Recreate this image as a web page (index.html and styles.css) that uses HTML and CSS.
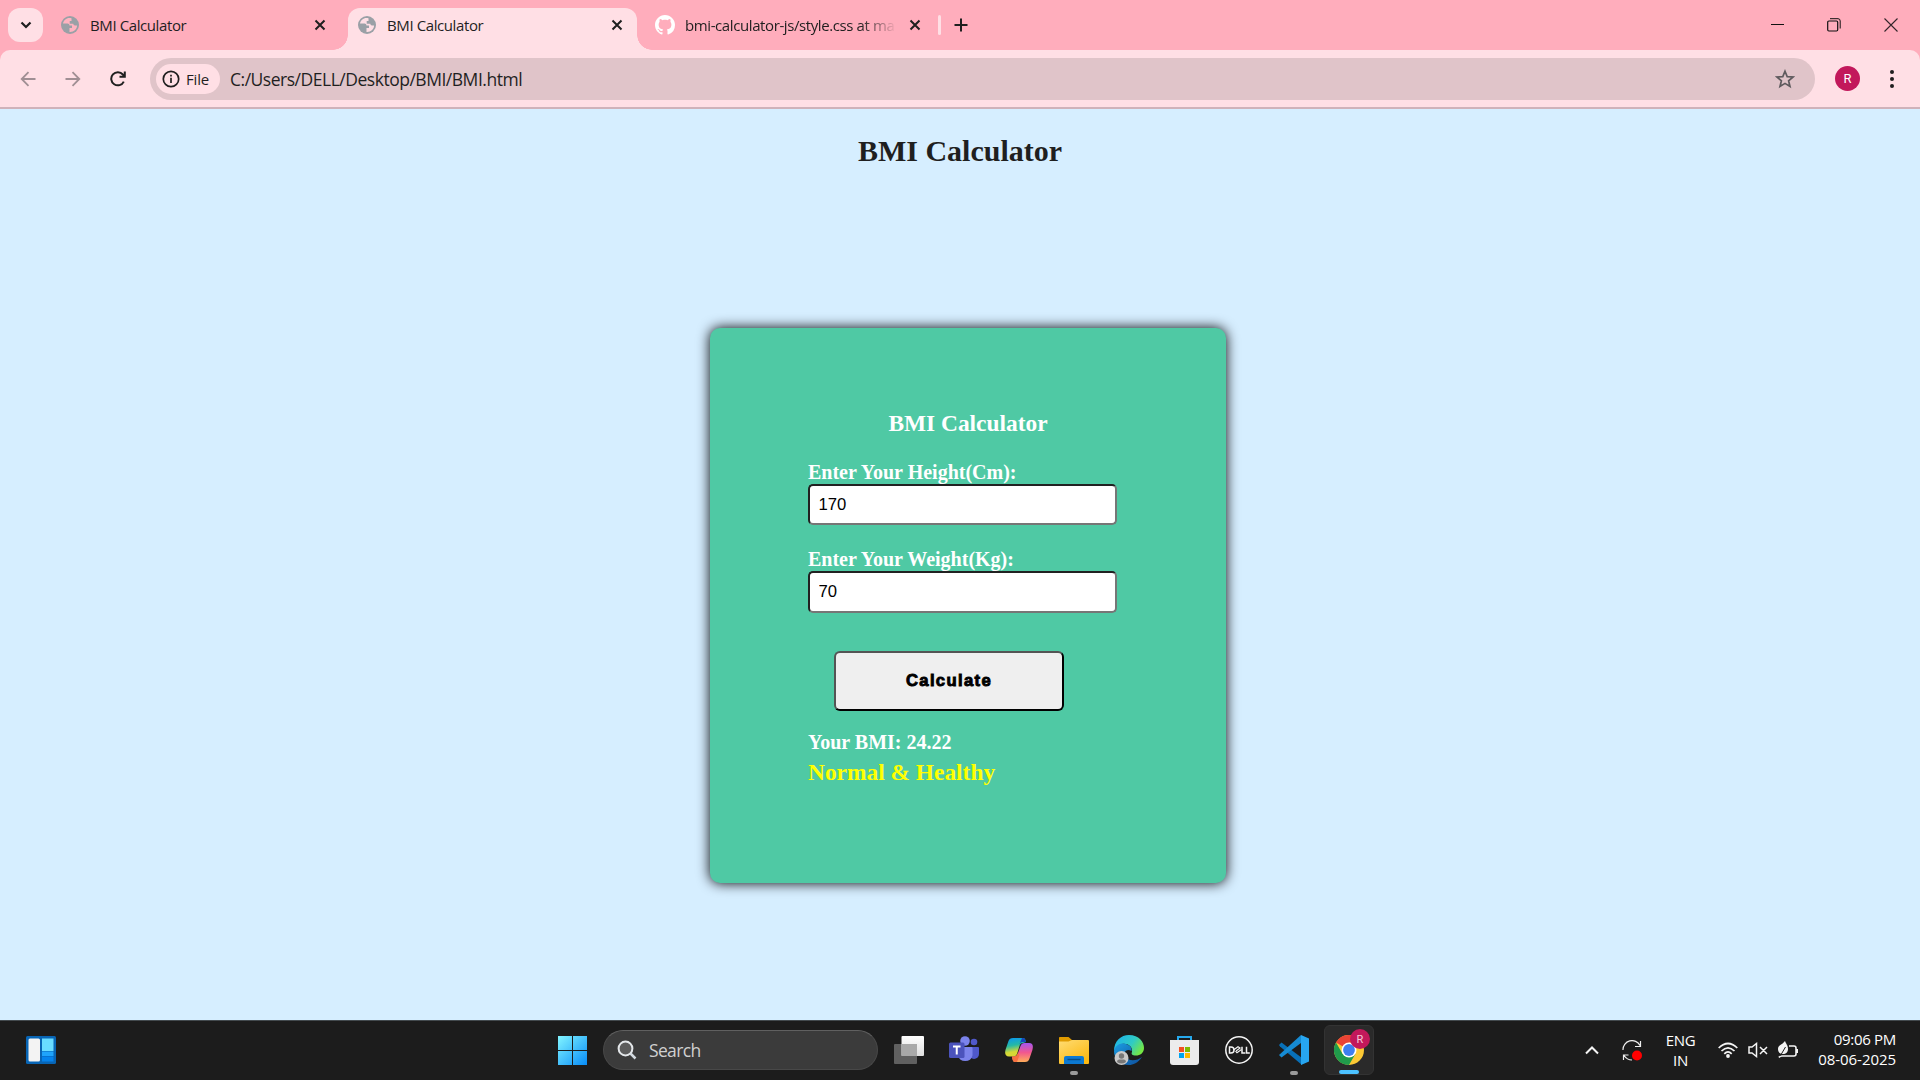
FILE: index.html
```html
<!DOCTYPE html>
<html lang="en">
<head>
<meta charset="utf-8">
<title>BMI Calculator</title>
<link rel="stylesheet" href="styles.css">
</head>
<body>
<svg class="defs" width="0" height="0">
  <defs>
    <symbol id="globe" viewBox="0 0 18 18"><circle cx="9" cy="9" r="9" fill="#9aa0a6"/><path d="M10.500 2.200C6 1 2.500 4 2 7.500H6.500Q8.500 7.500 8.500 9.500H11V12H8.500V15.900C13 16.200 16 13 16.100 9.500H14Q12.300 9.500 12.300 7.800H8.700V5H10.500Z" fill="currentColor"/></symbol>
    <symbol id="close" viewBox="0 0 12 12"><path d="M1.500 1.500L10.500 10.500M10.500 1.500L1.500 10.500" stroke="#1f1f1f" stroke-width="2"/></symbol>
  </defs>
</svg>

<header class="tabstrip">
  <button class="tab-search"><svg width="12" height="8" viewBox="0 0 12 8"><path d="M1.500 1.500L6 6L10.500 1.500" fill="none" stroke="#1f1f1f" stroke-width="2.200"/></svg></button>
  <div class="tab tab-first"><svg class="favicon"><use href="#globe"/></svg><span class="tab-title">BMI Calculator</span><svg class="tab-close"><use href="#close"/></svg></div>
  <div class="tab tab-active"><svg class="favicon"><use href="#globe"/></svg><span class="tab-title">BMI Calculator</span><svg class="tab-close"><use href="#close"/></svg></div>
  <div class="tab tab-last"><svg class="github" viewBox="0 0 16 16"><path fill="#fff" d="M8 0C3.580 0 0 3.580 0 8c0 3.540 2.290 6.530 5.470 7.590.4.070.550-.170.550-.380 0-.190-.010-.820-.010-1.490-2.010.370-2.530-.490-2.690-.940-.090-.230-.480-.940-.820-1.130-.280-.150-.680-.520-.010-.530.630-.010 1.080.580 1.230.820.720 1.210 1.870.870 2.330.660.070-.520.280-.870.510-1.070-1.780-.2-3.640-.890-3.640-3.950 0-.870.310-1.590.820-2.150-.080-.2-.360-1.020.080-2.120 0 0 .670-.210 2.200.820.640-.180 1.320-.270 2-.270s1.360.090 2 .270c1.530-1.040 2.200-.820 2.200-.820.440 1.100.160 1.920.080 2.120.510.560.820 1.270.820 2.150 0 3.070-1.870 3.750-3.650 3.950.290.250.540.730.540 1.480 0 1.070-.010 1.930-.010 2.200 0 .210.150.460.550.380A8.010 8.010 0 0 0 16 8c0-4.420-3.580-8-8-8z"/></svg><span class="tab-title fade">bmi-calculator-js/style.css at ma</span><svg class="tab-close"><use href="#close"/></svg></div>
  <span class="tab-divider"></span>
  <svg class="new-tab" width="14" height="14" viewBox="0 0 14 14"><path d="M7 .5V13.500M.5 7H13.500" stroke="#1f1f1f" stroke-width="2"/></svg>
  <div class="window-controls">
    <svg width="14" height="14" viewBox="0 0 14 14"><path d="M1 6.500H14" stroke="#111"/></svg>
    <svg width="14" height="14" viewBox="0 0 14 14" fill="none" stroke="#111"><rect x=".7" y="3" width="10" height="10" rx="1.200" stroke-width="1.200"/><path d="M3 .7H11Q13.200 .7 13.200 3V10.500"/></svg>
    <svg width="14" height="14" viewBox="0 0 14 14"><path d="M.5 .5L13.500 13.500M13.500 .5L.5 13.500" stroke="#33242a" stroke-width="1.100"/></svg>
  </div>
</header>

<nav class="toolbar">
  <svg class="nav-icon" viewBox="0 0 16 16"><path d="M15.500 8H2M8.500 1.200L1.700 8L8.500 14.800" fill="none" stroke="#a08f94" stroke-width="1.800"/></svg>
  <svg class="nav-icon" viewBox="0 0 16 16"><path d="M.5 8H14M7.500 1.200L14.300 8L7.500 14.800" fill="none" stroke="#a08f94" stroke-width="1.800"/></svg>
  <svg class="nav-icon" viewBox="0 0 16 16"><path d="M13.800 10.600A6.600 6.600 0 1 1 12.900 3.500L14.700 5.500M14.800 .5V5.700H9.500" fill="none" stroke="#1f1f1f" stroke-width="2"/></svg>
  <div class="omnibox">
    <span class="chip"><svg width="18" height="18" viewBox="0 0 18 18"><circle cx="9" cy="9" r="7.700" fill="none" stroke="#1f1f1f" stroke-width="1.700"/><path d="M9 7.800V13M9 4.700V6.500" stroke="#1f1f1f" stroke-width="1.700"/></svg><span>File</span></span>
    <span class="url">C:/Users/DELL/Desktop/BMI/BMI.html</span>
    <svg class="star" width="20" height="20" viewBox="0 0 20 20"><path d="M10 2.200L12.200 7.600L18 8L13.600 11.800L15 17.500L10 14.400L5 17.500L6.400 11.800L2 8L7.800 7.600Z" fill="none" stroke="#5f5b5e" stroke-width="1.700"/></svg>
  </div>
  <span class="avatar">R</span>
  <svg class="menu" width="4" height="18" viewBox="0 0 4 18" fill="#1f1f1f"><circle cx="2" cy="2" r="2"/><circle cx="2" cy="9" r="2"/><circle cx="2" cy="16" r="2"/></svg>
</nav>

<main class="page">
  <h1>BMI Calculator</h1>
  <form class="card">
    <h2>BMI Calculator</h2>
    <label for="height">Enter Your Height(Cm):</label>
    <input id="height" type="text" value="170">
    <label for="weight">Enter Your Weight(Kg):</label>
    <input id="weight" class="tall" type="text" value="70">
    <button class="calculate" type="button">Calculate</button>
    <p class="result">Your BMI: 24.22</p>
    <p class="verdict">Normal &amp; Healthy</p>
  </form>
</main>

<footer class="taskbar">
  <svg class="widgets" width="30" height="28" viewBox="0 0 30 28"><rect width="30" height="28" rx="1.500" fill="#0865b5"/><rect x="2.500" y="2.500" width="11.500" height="23" rx="1.500" fill="#f3f3f3"/><path d="M16 2.500H27.500V15H16Z" fill="#69dcff"/><path d="M16 15.500H27.500V20H16Z" fill="#1fa4fb"/><path d="M16 20.500H27.500V25.500H16Z" fill="#0583ec"/></svg>
  <div class="apps">
    <div class="app"><svg width="29" height="29" viewBox="0 0 29 29"><defs><linearGradient id="win" gradientUnits="userSpaceOnUse" x1="0" y1="0" x2="29" y2="29"><stop stop-color="#82f5ff"/><stop offset="1" stop-color="#078cf8"/></linearGradient></defs><path fill="url(#win)" d="M0 0H14V14H0ZM15 0H29V14H15ZM0 15H14V29H0ZM15 15H29V29H15Z"/></svg></div>
    <div class="search"><svg width="20" height="20" viewBox="0 0 20 20"><circle cx="8.500" cy="8.500" r="6.900" fill="#5c5c5c" stroke="#e4e7ea" stroke-width="2"/><path d="M13.500 13.500L18.500 18.500" stroke="#d2d9df" stroke-width="2.500"/></svg><span>Search</span></div>
    <div class="app"><svg width="30" height="28" viewBox="0 0 30 28"><defs><linearGradient id="tv" x2="0" y2="1"><stop stop-color="#fff"/><stop offset="1" stop-color="#dedede"/></linearGradient></defs><rect y="8" width="23" height="20" rx="1" fill="#606060"/><rect x="7.500" width="22.500" height="20" rx="1" fill="url(#tv)"/><path d="M7.500 8H23V20H7.500Z" fill="#a9a9a9"/></svg></div>
    <div class="app"><svg width="30" height="28" viewBox="0 0 30 28"><circle cx="25" cy="6" r="3.300" fill="#5059c9"/><path d="M20 11H29Q30 11 30 12V18A5 5 0 0 1 20 18Z" fill="#4f58ca"/><circle cx="16" cy="5" r="4.800" fill="#7b83eb"/><path d="M9 11H22.500Q23.500 11 23.500 12V19.500A7.500 7.500 0 0 1 9 19.500Z" fill="#7b83eb"/><rect y="6.500" width="15.500" height="15.500" rx="1.500" fill="#4b53bc"/><path d="M4 10.500H11.500M7.750 10.500V18.500" stroke="#fff" stroke-width="2"/></svg></div>
    <div class="app"><svg width="28" height="26" viewBox="0 0 28 26"><defs><linearGradient id="cpa" x2=".2" y2="1"><stop stop-color="#0895f5"/><stop offset=".45" stop-color="#25b9a5"/><stop offset=".8" stop-color="#d7d935"/></linearGradient><linearGradient id="cpb" x2="0" y2="1"><stop stop-color="#a456f1"/><stop offset=".5" stop-color="#f2578f"/><stop offset="1" stop-color="#ffad59"/></linearGradient></defs><path d="M8 1H18C20 1 20.500 3 21 5L18 6C16 6 15 7 14.500 9L12 17C11 19 10 19.500 8 19.500H4C0 19.500-.4 16 .6 12.500L3.500 4Q4.500 1 8 1Z" fill="url(#cpa)"/><path d="M17 1H18C20 1 20.500 3 21 5H17Q15 5 14 8Z" fill="#1447bd"/><path d="M20 25H10C8 25 7.500 23 7 19.500H10Q12 19.500 13 16L15.500 9Q16.500 6 19.500 6H24C28 6 28.400 9 27.400 13L24.500 21.500Q23.500 25 20 25Z" fill="url(#cpb)"/><path d="M7 19.500H10Q12 19 13 16L14.500 18L12 25H10Q7.500 25 7 19.500Z" fill="#f77042"/></svg></div>
    <div class="app running"><svg width="30" height="28" viewBox="0 0 30 28"><defs><linearGradient id="fld" x2=".7" y2="1"><stop stop-color="#ffdc73"/><stop offset="1" stop-color="#fcb912"/></linearGradient></defs><path d="M0 1.500Q0 1 1 1H9.500L13 4H20V9H0Z" fill="#e09b00"/><path d="M0 5.500H9.500L13 4H29Q30 4 30 5V27Q30 28 29 28H1Q0 28 0 27Z" fill="url(#fld)"/><path d="M5 28V22Q5 20 7 20H23Q25 20 25 22V28Z" fill="#0c79d2"/><path d="M8.500 23.500H21.500" stroke="#064d86" stroke-width="1.400"/></svg></div>
    <div class="app"><svg width="30" height="30" viewBox="0 0 30 30"><defs><linearGradient id="eda" y1=".1" x2="1" y2=".6"><stop stop-color="#1bb1ed"/><stop offset=".6" stop-color="#30cbc4"/><stop offset="1" stop-color="#74e744"/></linearGradient><linearGradient id="edb" x2="1" y2="1"><stop stop-color="#1b9de2"/><stop offset="1" stop-color="#0d4d9b"/></linearGradient></defs><path d="M0 16C0 6 7 0 15 0C25 0 30 7 30 13C30 18 26 20.500 22 20.500C18 20.500 17 19 18 17C19 11 13 8 8 9Q3 10 0 16Z" fill="url(#eda)"/><path d="M0 16C1 10 7 7.500 12 9C17 10.500 18 14 17.500 16C13 13 9 17 11 21C14 27 23 26 28 22C24 28 19 30 15 30C6 30 0 24 0 16Z" fill="url(#edb)"/><circle cx="7.500" cy="23" r="7" fill="#c9c9c9"/><circle cx="7.500" cy="21" r="2.700" fill="#777"/><path d="M3 27Q3 24.500 5 24.500H10Q12 24.500 12 27Q7.500 30 3 27Z" fill="#777"/></svg></div>
    <div class="app"><svg width="29" height="29" viewBox="0 0 29 29"><path d="M8 5V1H21V5" fill="none" stroke="#26a9ed" stroke-width="2"/><path d="M0 4H29V26Q29 29 26 29H3Q0 29 0 26Z" fill="#ececec"/><path d="M9 11H14V16H9Z" fill="#f25022"/><path d="M15 11H20V16H15Z" fill="#7fba00"/><path d="M9 17H14V22H9Z" fill="#00a4ef"/><path d="M15 17H20V22H15Z" fill="#ffb900"/></svg></div>
    <div class="app"><svg width="28" height="28" viewBox="0 0 28 28" fill="none" stroke="#f4f4f4"><circle cx="14" cy="14" r="13.200" stroke-width="1.500"/><path d="M4.500 11V17H6Q9 17 9 14T6 11ZM17 10.800V17H20.300M21.500 10.800V17H24.800" stroke-width="1.500"/><path d="M8.500 14L13 10.700L15 12L11 15M10.500 15.200L12 16.800L16.500 13.500M12 14.300L15.500 11.800" stroke-width="1.100"/></svg></div>
    <div class="app running"><svg width="30" height="30" viewBox="0 0 30 30"><path d="M0 10L2.500 7.500L23 23V30L1 11.500Z" fill="#0870b8"/><path d="M0 20L22 0V8L2.500 22.500Z" fill="#168bd3"/><path d="M22 0L30 3.500V26.500L22 30Z" fill="#27a6f1"/></svg></div>
    <div class="app active"><svg width="30" height="30" viewBox="0 0 30 30"><circle cx="15" cy="15" r="15" fill="#fcc934"/><path d="M15 15L2 7.500A15 15 0 0 1 28 7.500H15Z" fill="#ea4335"/><path d="M2 7.500A15 15 0 0 0 15 30L21.500 18.700L8.500 18.700Z" fill="#209b4b"/><circle cx="15" cy="15" r="7.500" fill="#fff"/><circle cx="15" cy="15" r="5.900" fill="#3e7ff0"/></svg><span class="profile">R</span></div>
  </div>
  <div class="tray">
    <svg class="chevron" width="14" height="9" viewBox="0 0 14 9"><path d="M1 7.500L7 1.500L13 7.500" fill="none" stroke="#f4f4f4" stroke-width="2"/></svg>
    <svg class="sync" width="21" height="21" viewBox="0 0 21 21"><path d="M1 10A9 9 0 0 1 18 5.500M18.500 1V6.500H13M1.500 20V15H6.500M2 15.500Q5 20 10 20" fill="none" stroke="#eee" stroke-width="1.200"/><circle cx="15" cy="15.500" r="5" fill="red"/></svg>
    <div class="language"><span>ENG</span><span>IN</span></div>
    <div class="system">
      <svg width="20" height="16" viewBox="0 0 20 16"><path d="M.7 6Q10-3 19.300 6M3.500 9Q10 2.500 16.500 9M6.300 11.800Q10 8 13.700 11.800" fill="none" stroke="#f4f4f4" stroke-width="1.700"/><circle cx="10" cy="14" r="1.900" fill="#f4f4f4"/></svg>
      <svg width="20" height="16" viewBox="0 0 20 16"><path d="M1 5H4L8.500 1.500V14.500L4 11H1ZM12 5L19 12M19 5L12 12" fill="none" stroke="#f4f4f4" stroke-width="1.500"/></svg>
      <svg width="21" height="18" viewBox="0 0 21 18"><path d="M11 5H16Q18 5 18 7V13Q18 15 16 15H4Q2 15 1 16.500" fill="none" stroke="#f4f4f4" stroke-width="1.600"/><path d="M18 8H20V12H18Z" fill="#f4f4f4"/><path d="M7 0C8 3 10 4 10 8C10 11 8 13 5 13C2 13 0 11 0 8C0 4 4 4 7 0Z" fill="#f4f4f4"/><path d="M2.500 14.500L7.500 6" stroke="#1c1c1c"/></svg>
    </div>
    <div class="clock"><span>09:06 PM</span><span class="date">08-06-2025</span></div>
  </div>
</footer>
</body>
</html>
```
FILE: styles.css
```css
* { box-sizing: border-box; }
body {
  margin: 0;
  width: 1920px;
  height: 1080px;
  overflow: hidden;
  display: flex;
  flex-direction: column;
  background: linear-gradient(#ffadbc 70px, #d6eeff 70px);
  font-family: "Open Sans", "Noto Sans", sans-serif;
  color: #1f1f1f;
}
svg { display: block; flex: none; }
.defs { position: absolute; }

/* Tab strip */
.tabstrip {
  height: 50px;
  flex: none;
  display: flex;
  align-items: center;
  background: #ffadbc;
  padding-left: 8px;
}
.tab-search {
  width: 35px;
  height: 34px;
  border: 0;
  border-radius: 12px;
  background: #ffdfe5;
  display: grid;
  place-items: center;
  padding: 0;
}
.tab { display: flex; align-items: center; font-size: 15px; letter-spacing: -.4px; white-space: nowrap; }
.tab-first { width: 305px; padding: 0 22px 0 18px; color: #1f1f1f; }
.tab-active {
  position: relative;
  width: 289px;
  height: 42px;
  margin-top: 8px;
  padding: 0 14px 8px 10px;
  border-radius: 12px 12px 0 0;
  background: #ffdfe5;
}
.tab-active::before, .tab-active::after {
  content: "";
  position: absolute;
  bottom: 0;
  width: 15px;
  height: 15px;
}
.tab-active::before { left: -15px; background: radial-gradient(circle at 0 0, transparent 14.5px, #ffdfe5 15px); }
.tab-active::after { right: -15px; background: radial-gradient(circle at 100% 0, transparent 14.5px, #ffdfe5 15px); }
.tab-last { width: 301px; padding: 0 17px 0 18px; }
.favicon { width: 18px; height: 18px; margin-right: 11px; color: #ffb3c0; }
.tab-active .favicon { color: #ffdfe5; }
.github { width: 20px; height: 20px; margin-right: 10px; }
.tab-title { flex: 1; line-height: 20px; }
.fade { flex: none; width: 220px; margin-right: 3px; -webkit-mask-image: linear-gradient(90deg, #000 175px, transparent 212px); mask-image: linear-gradient(90deg, #000 175px, transparent 212px); }
.tab-close { width: 12px; height: 12px; margin-left: auto; }
.tab-divider { width: 3px; height: 20px; border-radius: 2px; background: #ffdfe5; }
.new-tab { margin-left: 13px; }
.window-controls { display: flex; gap: 43px; margin-left: auto; padding-right: 22px; }

/* Toolbar */
.toolbar {
  height: 59px;
  flex: none;
  display: flex;
  align-items: center;
  padding: 0 26px 0 20px;
  background: #ffdfe5;
  border-bottom: 2px solid #cfb2ba;
  border-radius: 10px 10px 0 0;
}
.nav-icon { width: 16px; height: 16px; margin-right: 29px; }
.omnibox {
  width: 1665px;
  height: 42px;
  border-radius: 21px;
  background: #e0c4c9;
  display: flex;
  align-items: center;
  padding: 0 20px 0 6px;
  margin-left: -5px;
}
.chip {
  width: 64px;
  height: 30px;
  border-radius: 15px;
  background: #ffdfe5;
  display: flex;
  align-items: center;
  gap: 6px;
  padding-left: 6px;
  font-size: 15px;
  font-weight: 500;
  letter-spacing: -.2px;
}
.url { margin-left: 10px; font-size: 17.5px; letter-spacing: -.48px; line-height: 24px; }
.star { margin-left: auto; }
.avatar, .profile {
  display: grid;
  place-items: center;
  background: #c2185b;
  color: #fff;
  border-radius: 50%;
  font-family: Roboto, sans-serif;
}
.avatar { width: 25px; height: 25px; margin-left: 20px; font-size: 13px; }
.menu { margin-left: auto; }

/* Calculator page */
.page {
  flex: 1;
  background: #d6eeff;
  padding: 25px 0 0;
  font-family: "Liberation Serif", "Times New Roman", serif;
}
h1 { margin: 0; font-size: 30px; line-height: 34px; text-align: center; }
.card {
  width: 516px;
  height: 555px;
  margin: 160px 0 0 710px;
  padding: 82px 98px 0;
  border-radius: 10px;
  background: #4fc9a4;
  box-shadow: 0 0 12.5px #000;
  display: flex;
  flex-direction: column;
  color: #fff;
  font-weight: bold;
}
h2 { margin: 0 0 25px; font-size: 23.4px; line-height: 26px; text-align: center; }
label { margin-bottom: 1px; font-size: 20px; line-height: 22px; }
input {
  width: 309px;
  height: 41px;
  margin: 0 0 23px;
  padding: 1px 8.5px;
  border: 2px inset #767676;
  border-radius: 5px;
  background: #fff;
  color: #000;
  font: 16.67px "Liberation Sans", Arial, sans-serif;
}
.tall { height: 42px; }
.calculate {
  width: 230px;
  height: 60px;
  margin: 15px 0 20px 26px;
  border: 2px outset #000;
  border-radius: 6px;
  background: #efefef;
  color: #000;
  font: bold 16.67px "Liberation Sans", Arial, sans-serif;
  letter-spacing: 1.35px;
  -webkit-text-stroke: .9px #000;
}
p { margin: 0; }
.result { font-size: 20px; line-height: 22px; }
.verdict { margin-top: 6px; font-size: 23.4px; line-height: 26px; color: #ff0; }

/* Taskbar */
.taskbar {
  height: 60px;
  flex: none;
  display: flex;
  align-items: center;
  background: #1c1c1c;
  border-top: 1px solid #434a4e;
  padding-bottom: 1px;
  color: #fff;
}
.widgets { margin-left: 26px; }
.apps { display: flex; align-items: center; margin-left: 488.5px; }
.app { position: relative; width: 55px; height: 50px; display: grid; place-items: center; }
.active { width: 50px; margin-left: 2.5px; background: #2a2a2a; border: 1px solid #333; border-radius: 6px; }
.running::after, .active::after {
  content: "";
  position: absolute;
  bottom: 0;
  left: calc(50% - 4px);
  width: 8px;
  height: 4px;
  border-radius: 2px;
  background: #9a9a9a;
}
.active::after { left: 14px; width: 20px; background: #4cc2ff; }
.profile { position: absolute; left: 25px; top: 3px; width: 20px; height: 20px; font-size: 11px; color: #f5c8d8; }
.search {
  width: 275px;
  height: 40px;
  margin: 0 3.5px;
  padding-left: 13px;
  border: 1px solid #484848;
  border-top-color: #606060;
  border-radius: 20px;
  background: #3b3b3b;
  display: flex;
  align-items: center;
  gap: 12px;
  font-size: 17.5px;
  letter-spacing: -.65px;
  color: #d0d0d0;
}
.tray { margin-left: auto; display: flex; align-items: center; padding-right: 24px; font-size: 15px; line-height: 20px; }
.chevron { margin-right: 23px; }
.sync { margin-right: 23px; }
.language { width: 29px; display: flex; flex-direction: column; align-items: center; letter-spacing: -.3px; margin: 0 23px 1px 0; }
.system { display: flex; align-items: center; gap: 10px; margin-right: 19px; }
.clock { width: 78px; margin-bottom: 3px; display: flex; flex-direction: column; align-items: flex-end; letter-spacing: -.3px; white-space: nowrap; }
.date { letter-spacing: -.05px; }
```
